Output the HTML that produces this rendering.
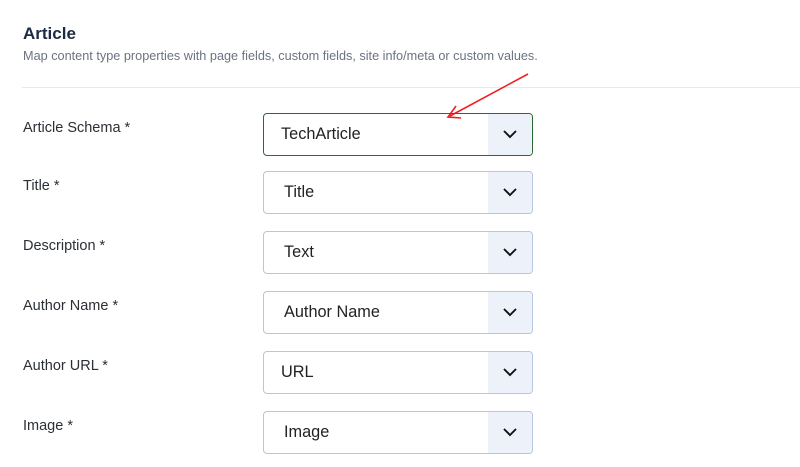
<!DOCTYPE html>
<html><head><style>
body{margin:0;width:800px;height:467px;background:#fff;font-family:"Liberation Sans",sans-serif;position:relative;overflow:hidden}
h1{position:absolute;left:23px;top:24px;margin:0;font-size:17px;font-weight:bold;color:#1c2a44}
.sub{position:absolute;left:23px;top:49px;font-size:12.7px;color:#6b7280}
.hr{position:absolute;left:22px;right:0;top:87px;height:1px;background:#e8e9ec}
.lbl{position:absolute;left:23px;font-size:14.5px;color:#2b2f36}
.sel{position:absolute;left:263px;width:268px;height:41px;border:1px solid #b5c6e2;border-radius:4px;box-sizing:content-box;overflow:hidden}
.sel span{position:absolute;left:20px;top:11px;font-size:16.3px;color:#222}
.sel .c{position:absolute;right:0;top:0;width:44px;height:100%;background:#edf1fa}
.sel svg{position:absolute;right:15px;top:15px}
</style></head><body>
<h1>Article</h1>
<div class="sub">Map content type properties with page fields, custom fields, site info/meta or custom values.</div>
<div class="hr"></div>
<svg style="position:absolute;left:0;top:0" width="800" height="467"><line x1="528" y1="74" x2="450" y2="116" stroke="#f02020" stroke-width="1.6"/><path d="M456 106 L448 117 L461 118" fill="none" stroke="#f02020" stroke-width="1.6"/></svg>

<div class="lbl" style="top:120px">Article Schema *</div>
<div class="sel" style="top:113px;border-color:#2e6b32"><span style="left:17px">TechArticle</span><div class="c"></div><svg width="14" height="10"><path d="M1 2 L7 8 L13 2" fill="none" stroke="#111" stroke-width="1.9"/></svg></div>

<div class="lbl" style="top:178px">Title *</div>
<div class="sel" style="top:171px"><span>Title</span><div class="c"></div><svg width="14" height="10"><path d="M1 2 L7 8 L13 2" fill="none" stroke="#111" stroke-width="1.9"/></svg></div>

<div class="lbl" style="top:238px">Description *</div>
<div class="sel" style="top:231px"><span>Text</span><div class="c"></div><svg width="14" height="10"><path d="M1 2 L7 8 L13 2" fill="none" stroke="#111" stroke-width="1.9"/></svg></div>

<div class="lbl" style="top:298px">Author Name *</div>
<div class="sel" style="top:291px"><span>Author Name</span><div class="c"></div><svg width="14" height="10"><path d="M1 2 L7 8 L13 2" fill="none" stroke="#111" stroke-width="1.9"/></svg></div>

<div class="lbl" style="top:358px">Author URL *</div>
<div class="sel" style="top:351px"><span style="left:17px">URL</span><div class="c"></div><svg width="14" height="10"><path d="M1 2 L7 8 L13 2" fill="none" stroke="#111" stroke-width="1.9"/></svg></div>

<div class="lbl" style="top:418px">Image *</div>
<div class="sel" style="top:411px"><span>Image</span><div class="c"></div><svg width="14" height="10"><path d="M1 2 L7 8 L13 2" fill="none" stroke="#111" stroke-width="1.9"/></svg></div>
</body></html>
